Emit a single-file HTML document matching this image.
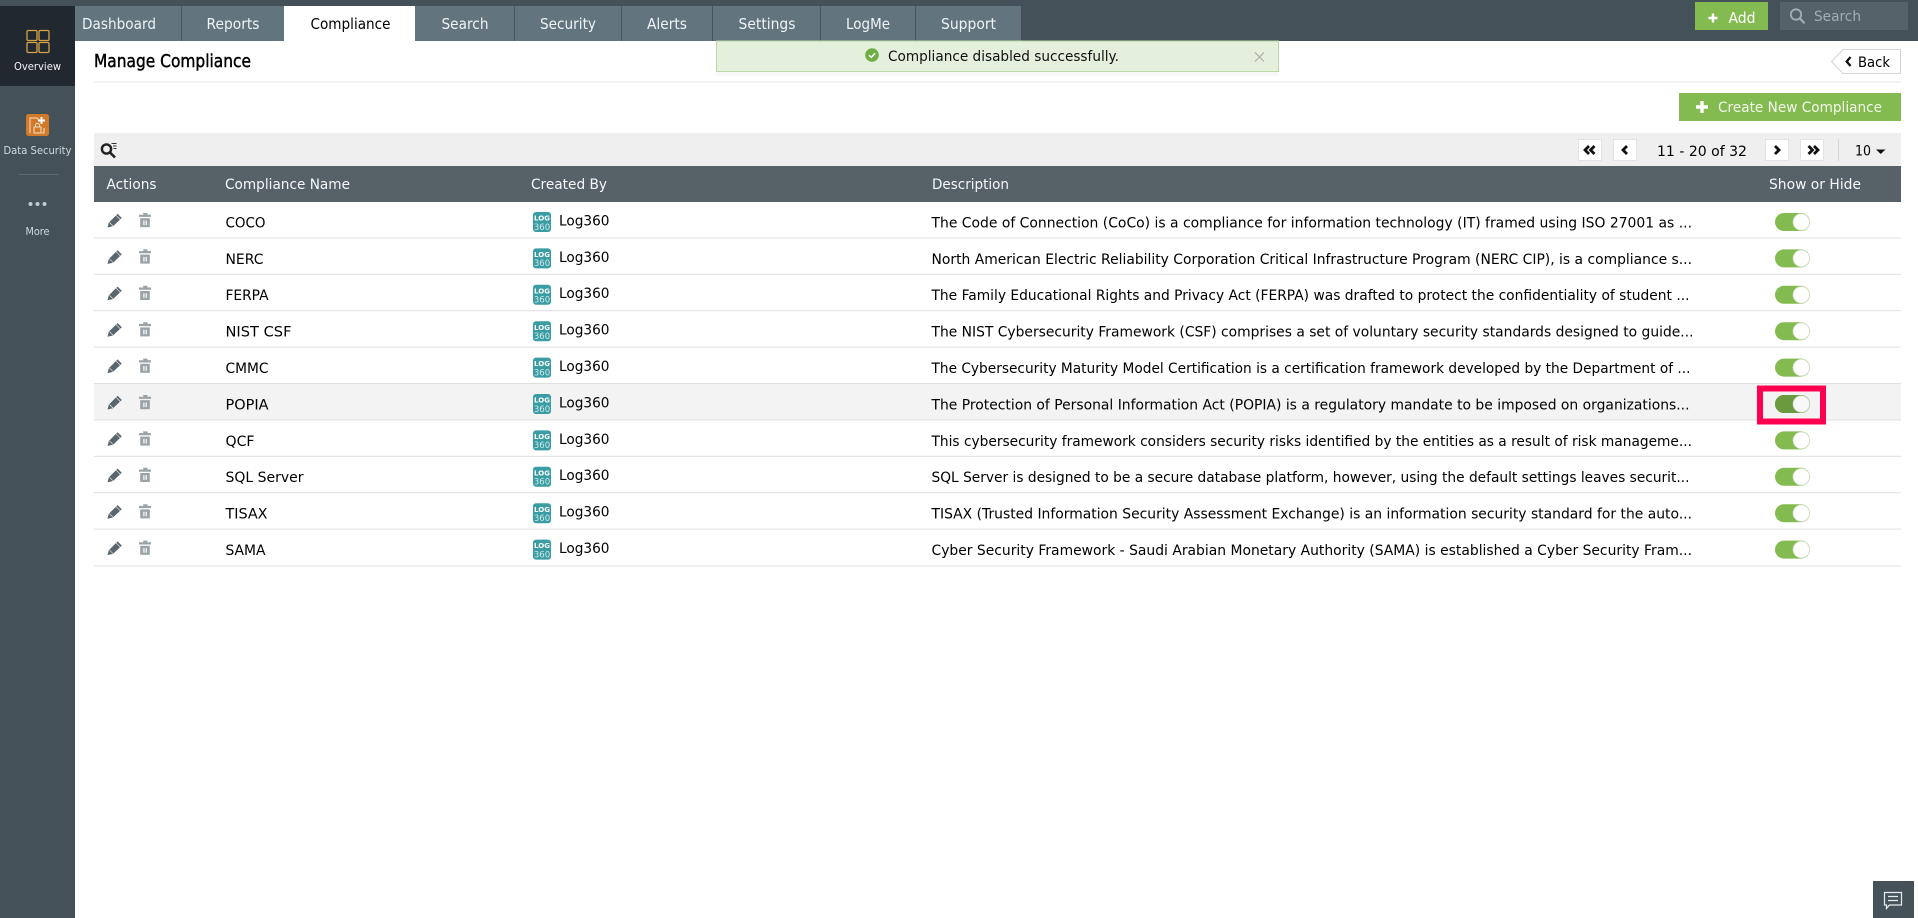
<!DOCTYPE html>
<html><head><meta charset="utf-8"><title>Manage Compliance</title>
<style>
html,body{margin:0;padding:0;background:#fff;overflow:hidden;width:1918px;height:918px}
svg{display:block}
text{font-family:"DejaVu Sans","Liberation Sans",sans-serif;font-size:14.6px;fill:#000}
.t{fill:#eef3f5;font-size:15px}
.h{fill:#f6f8f9;font-size:14.6px}
.s{font-size:10.5px;fill:#d2d9dc;text-anchor:middle}
</style></head><body>
<svg width="1918" height="918" viewBox="0 0 1918 918" xmlns="http://www.w3.org/2000/svg">
<defs>
<g id="act">
<path d="M107.5 227.5L108.8 222.6L117.6 213.8L121.8 218L113 226.3Z" fill="#5a666d"/>
<path d="M109.5 222.5L113 226M116 215.3L120.2 219.5" stroke="#fff" stroke-width=".6" fill="none"/>
<path d="M143 213h4.5v1.7h3.5v2.2h-12v-2.2h4.5z" fill="#9aa3a7"/>
<path d="M140.2 218.2h9.6v9h-9.6z" fill="#9aa3a7"/>
<path d="M143.3 220.5h1.2v4.6h-1.2zM145.6 220.5h1.2v4.6h-1.2z" fill="#fff"/>
<rect x="533" y="212" width="18" height="20" rx="3" fill="#3a9da3"/>
<text x="542" y="220.6" text-anchor="middle" style="fill:#fff;font-size:7px;font-weight:700">LOG</text>
<text x="542" y="229.8" text-anchor="middle" style="fill:#cfeaea;font-size:8.5px">360</text>
<text x="559" y="225.4" textLength="50.5" lengthAdjust="spacingAndGlyphs">Log360</text>
<rect x="1775" y="213" width="35" height="18" rx="9" fill="#84bb50"/>
<circle cx="1801.3" cy="222" r="8.2" fill="#fff" stroke="#dbe5d2" stroke-width=".8"/>
</g>
</defs>

<!-- top bar + sidebar -->
<rect x="0" y="0" width="1918" height="41" fill="#445159"/>
<rect x="0" y="0" width="75" height="918" fill="#445159"/>
<rect x="0" y="6" width="75" height="80" fill="#21282f"/>

<!-- sidebar icons -->
<g fill="none" stroke="#d6a345" stroke-width="1.3">
<rect x="27" y="30.5" width="10" height="10" rx="1.2"/><rect x="39" y="30.5" width="10" height="10" rx="1.2"/>
<rect x="27" y="42.5" width="10" height="10" rx="1.2"/><rect x="39" y="42.5" width="10" height="10" rx="1.2"/>
</g>
<text x="37.5" y="70" class="s" style="fill:#f2f4f5" textLength="47" lengthAdjust="spacingAndGlyphs">Overview</text>
<rect x="26" y="114" width="23" height="22" rx="2.5" fill="#d07a2a"/>
<path d="M30 133v-15h7l3 3M44 128v5h-2" fill="none" stroke="#f6dfc6" stroke-width="1"/>
<path d="M41.5 117v7M38 120.5h7" stroke="#fff" stroke-width="2" fill="none"/>
<rect x="34" y="127" width="7" height="6" fill="none" stroke="#f6dfc6" stroke-width="1"/>
<path d="M35.5 127v-1.6a2 2 0 0 1 4 0V127" fill="none" stroke="#f6dfc6" stroke-width="1"/>
<text x="37.5" y="154" class="s" textLength="68" lengthAdjust="spacingAndGlyphs">Data Security</text>
<rect x="18" y="174" width="41" height="1" fill="#5c6a72"/>
<circle cx="30.5" cy="204" r="2" fill="#c3cace"/><circle cx="37.5" cy="204" r="2" fill="#c3cace"/><circle cx="44.5" cy="204" r="2" fill="#c3cace"/>
<text x="37.5" y="235" class="s" textLength="24" lengthAdjust="spacingAndGlyphs">More</text>

<!-- tabs -->
<rect x="75" y="6" width="946" height="35" fill="#62757f"/>
<rect x="284" y="6" width="131" height="35" fill="#fff"/>
<g fill="#46545c">
<rect x="181" y="6" width="1" height="35"/><rect x="514" y="6" width="1" height="35"/><rect x="621" y="6" width="1" height="35"/><rect x="712" y="6" width="1" height="35"/><rect x="820" y="6" width="1" height="35"/><rect x="915" y="6" width="1" height="35"/>
</g>
<text class="t" x="82" y="29" textLength="74" lengthAdjust="spacingAndGlyphs">Dashboard</text>
<text class="t" x="206.5" y="29" textLength="53" lengthAdjust="spacingAndGlyphs">Reports</text>
<text class="t" style="fill:#000" x="310.5" y="29" textLength="80" lengthAdjust="spacingAndGlyphs">Compliance</text>
<text class="t" x="441.5" y="29" textLength="47" lengthAdjust="spacingAndGlyphs">Search</text>
<text class="t" x="540" y="29" textLength="56" lengthAdjust="spacingAndGlyphs">Security</text>
<text class="t" x="647" y="29" textLength="40" lengthAdjust="spacingAndGlyphs">Alerts</text>
<text class="t" x="738.5" y="29" textLength="57" lengthAdjust="spacingAndGlyphs">Settings</text>
<text class="t" x="846" y="29" textLength="44" lengthAdjust="spacingAndGlyphs">LogMe</text>
<text class="t" x="941" y="29" textLength="55" lengthAdjust="spacingAndGlyphs">Support</text>

<!-- add + search -->
<rect x="1695" y="2" width="73" height="28" fill="#84bb50"/>
<path d="M1713 13.5v9M1708.5 18h9" stroke="#fff" stroke-width="2.4"/>
<text x="1728.5" y="23" style="fill:#fff;font-size:15px" textLength="27" lengthAdjust="spacingAndGlyphs">Add</text>
<rect x="1780" y="2" width="128" height="28" fill="#55626a"/>
<circle cx="1796" cy="14.5" r="5.2" fill="none" stroke="#a4aeb3" stroke-width="1.8"/>
<path d="M1800 18.5l4.5 4.8" stroke="#a4aeb3" stroke-width="2.2"/>
<text x="1814" y="21" style="fill:#a3adb2;font-size:14.6px" textLength="47" lengthAdjust="spacingAndGlyphs">Search</text>

<!-- title -->
<text x="94" y="67" style="font-size:17.5px;stroke:#000;stroke-width:.45" textLength="157" lengthAdjust="spacingAndGlyphs">Manage Compliance</text>
<rect x="94" y="81.5" width="1807" height="1" fill="#e4e4e4"/>

<!-- toast -->
<rect x="716" y="72" width="563" height="4" fill="#000" opacity=".025"/>
<rect x="716.5" y="41" width="562" height="30.5" fill="#e4efdc" stroke="#bcd8a6"/>
<circle cx="872" cy="55" r="6.8" fill="#6fae45"/>
<path d="M869 55.2l2.2 2.2 4-4.2" stroke="#fff" stroke-width="1.5" fill="none"/>
<text x="888" y="61" textLength="231" lengthAdjust="spacingAndGlyphs" style="fill:#111">Compliance disabled successfully.</text>
<path d="M1255 52.5l9 9M1264 52.5l-9 9" stroke="#a9aea8" stroke-width="1.2"/>

<!-- back -->
<path d="M1843 49.5H1900.5V73.5H1843L1831.5 61.5Z" fill="#fff" stroke="#d4d4d4"/>
<path d="M1850.5 57l-3.8 4.5 3.8 4.5" fill="none" stroke="#111" stroke-width="2.3"/>
<text x="1858" y="67" textLength="32" lengthAdjust="spacingAndGlyphs">Back</text>

<!-- create -->
<rect x="1679" y="93" width="222" height="28" fill="#84bb50"/>
<path d="M1702 101v12M1696 107h12" stroke="#fff" stroke-width="3.4"/>
<text x="1718" y="112" style="fill:#f2f8ea" textLength="164" lengthAdjust="spacingAndGlyphs">Create New Compliance</text>

<!-- toolbar -->
<rect x="94" y="133" width="1807" height="33" fill="#efefef"/>
<circle cx="106.5" cy="149" r="4.6" fill="none" stroke="#222" stroke-width="2.4"/>
<path d="M110 152.5l5 5" stroke="#222" stroke-width="2.6"/>
<path d="M111.5 143.5h5M113 146h3.5M113.5 148.5h3" stroke="#333" stroke-width="1.1"/>
<g fill="#fff" stroke="#e2e2e2" stroke-width="1">
<rect x="1578.5" y="139.5" width="23" height="21"/><rect x="1613.5" y="139.5" width="23" height="21"/>
<rect x="1765.5" y="139.5" width="23" height="21"/><rect x="1800.5" y="139.5" width="23" height="21"/>
</g>
<g fill="none" stroke="#111" stroke-width="2.8">
<path d="M1589 146l-4 4 4 4M1594.5 146l-4 4 4 4"/>
<path d="M1627 146l-4 4 4 4"/>
<path d="M1775 146l4 4-4 4"/>
<path d="M1808.5 146l4 4-4 4M1814 146l4 4-4 4"/>
</g>
<text x="1657" y="156" textLength="90" lengthAdjust="spacingAndGlyphs">11 - 20 of 32</text>
<rect x="1838" y="139" width="1" height="22" fill="#d5d5d5"/>
<text x="1855" y="155.5" textLength="16" lengthAdjust="spacingAndGlyphs">10</text>
<path d="M1876 149.5h9.5l-4.75 4.5z" fill="#111"/>

<!-- header -->
<rect x="94" y="166" width="1807" height="36" fill="#566168"/>
<text class="h" x="106.5" y="189" textLength="50" lengthAdjust="spacingAndGlyphs">Actions</text>
<text class="h" x="225" y="189" textLength="125" lengthAdjust="spacingAndGlyphs">Compliance Name</text>
<text class="h" x="531" y="189" textLength="76" lengthAdjust="spacingAndGlyphs">Created By</text>
<text class="h" x="932" y="189" textLength="77" lengthAdjust="spacingAndGlyphs">Description</text>
<text class="h" x="1769" y="189" textLength="92" lengthAdjust="spacingAndGlyphs">Show or Hide</text>

<!-- row highlight and lines -->
<rect x="94" y="384" width="1807" height="36.4" fill="#f3f3f3"/>
<g fill="#dfdfdf">
<rect x="94" y="237.4" width="1807" height="1"/><rect x="94" y="273.8" width="1807" height="1"/><rect x="94" y="310.2" width="1807" height="1"/><rect x="94" y="346.6" width="1807" height="1"/><rect x="94" y="383" width="1807" height="1"/><rect x="94" y="419.4" width="1807" height="1"/><rect x="94" y="455.8" width="1807" height="1"/><rect x="94" y="492.2" width="1807" height="1"/><rect x="94" y="528.6" width="1807" height="1"/><rect x="94" y="565.4" width="1807" height="1"/>
</g>

<!-- rows -->
<g>
<use href="#act"/>
<text x="225.5" y="227.4" textLength="40" lengthAdjust="spacingAndGlyphs">COCO</text>
<text x="931.5" y="227.4" textLength="760.5" lengthAdjust="spacingAndGlyphs">The Code of Connection (CoCo) is a compliance for information technology (IT) framed using ISO 27001 as ...</text>
</g>
<g transform="translate(0,36.4)">
<use href="#act"/>
<text x="225.5" y="227.4" textLength="38" lengthAdjust="spacingAndGlyphs">NERC</text>
<text x="931.5" y="227.4" textLength="760.5" lengthAdjust="spacingAndGlyphs">North American Electric Reliability Corporation Critical Infrastructure Program (NERC CIP), is a compliance s...</text>
</g>
<g transform="translate(0,72.8)">
<use href="#act"/>
<text x="225.5" y="227.4" textLength="43" lengthAdjust="spacingAndGlyphs">FERPA</text>
<text x="931.5" y="227.4" textLength="758" lengthAdjust="spacingAndGlyphs">The Family Educational Rights and Privacy Act (FERPA) was drafted to protect the confidentiality of student ...</text>
</g>
<g transform="translate(0,109.2)">
<use href="#act"/>
<text x="225.5" y="227.4" textLength="66" lengthAdjust="spacingAndGlyphs">NIST CSF</text>
<text x="931.5" y="227.4" textLength="762" lengthAdjust="spacingAndGlyphs">The NIST Cybersecurity Framework (CSF) comprises a set of voluntary security standards designed to guide...</text>
</g>
<g transform="translate(0,145.6)">
<use href="#act"/>
<text x="225.5" y="227.4" textLength="43" lengthAdjust="spacingAndGlyphs">CMMC</text>
<text x="931.5" y="227.4" textLength="759" lengthAdjust="spacingAndGlyphs">The Cybersecurity Maturity Model Certification is a certification framework developed by the Department of ...</text>
</g>
<g transform="translate(0,182)">
<use href="#act"/>
<rect x="1775" y="213" width="35" height="18" rx="9" fill="#6a9a3e"/>
<circle cx="1801.3" cy="222" r="8.2" fill="#f8f8f8" stroke="#d7dfcf" stroke-width=".8"/>
<text x="225.5" y="227.4" textLength="43" lengthAdjust="spacingAndGlyphs">POPIA</text>
<text x="931.5" y="227.4" textLength="758" lengthAdjust="spacingAndGlyphs">The Protection of Personal Information Act (POPIA) is a regulatory mandate to be imposed on organizations...</text>
</g>
<g transform="translate(0,218.4)">
<use href="#act"/>
<text x="225.5" y="227.4" textLength="29" lengthAdjust="spacingAndGlyphs">QCF</text>
<text x="931.5" y="227.4" textLength="760.5" lengthAdjust="spacingAndGlyphs">This cybersecurity framework considers security risks identified by the entities as a result of risk manageme...</text>
</g>
<g transform="translate(0,254.8)">
<use href="#act"/>
<text x="225.5" y="227.4" textLength="78" lengthAdjust="spacingAndGlyphs">SQL Server</text>
<text x="931.5" y="227.4" textLength="758" lengthAdjust="spacingAndGlyphs">SQL Server is designed to be a secure database platform, however, using the default settings leaves securit...</text>
</g>
<g transform="translate(0,291.2)">
<use href="#act"/>
<text x="225.5" y="227.4" textLength="42" lengthAdjust="spacingAndGlyphs">TISAX</text>
<text x="931.5" y="227.4" textLength="760.5" lengthAdjust="spacingAndGlyphs">TISAX (Trusted Information Security Assessment Exchange) is an information security standard for the auto...</text>
</g>
<g transform="translate(0,327.6)">
<use href="#act"/>
<text x="225.5" y="227.4" textLength="40" lengthAdjust="spacingAndGlyphs">SAMA</text>
<text x="931.5" y="227.4" textLength="760.5" lengthAdjust="spacingAndGlyphs">Cyber Security Framework - Saudi Arabian Monetary Authority (SAMA) is established a Cyber Security Fram...</text>
</g>

<!-- pink highlight -->
<rect x="1760" y="388.5" width="63" height="33" fill="none" stroke="#ff0050" stroke-width="6"/>

<!-- chat -->
<rect x="1873" y="881" width="41" height="37" fill="#46525a"/>
<path d="M1884.5 892.5h17v12.5h-12l-3 3.5v-3.5h-2z" fill="none" stroke="#e8ecee" stroke-width="1.2"/>
<path d="M1888 896.5h10M1888 900.5h10" stroke="#e8ecee" stroke-width="1.2"/>
</svg>
</body></html>
